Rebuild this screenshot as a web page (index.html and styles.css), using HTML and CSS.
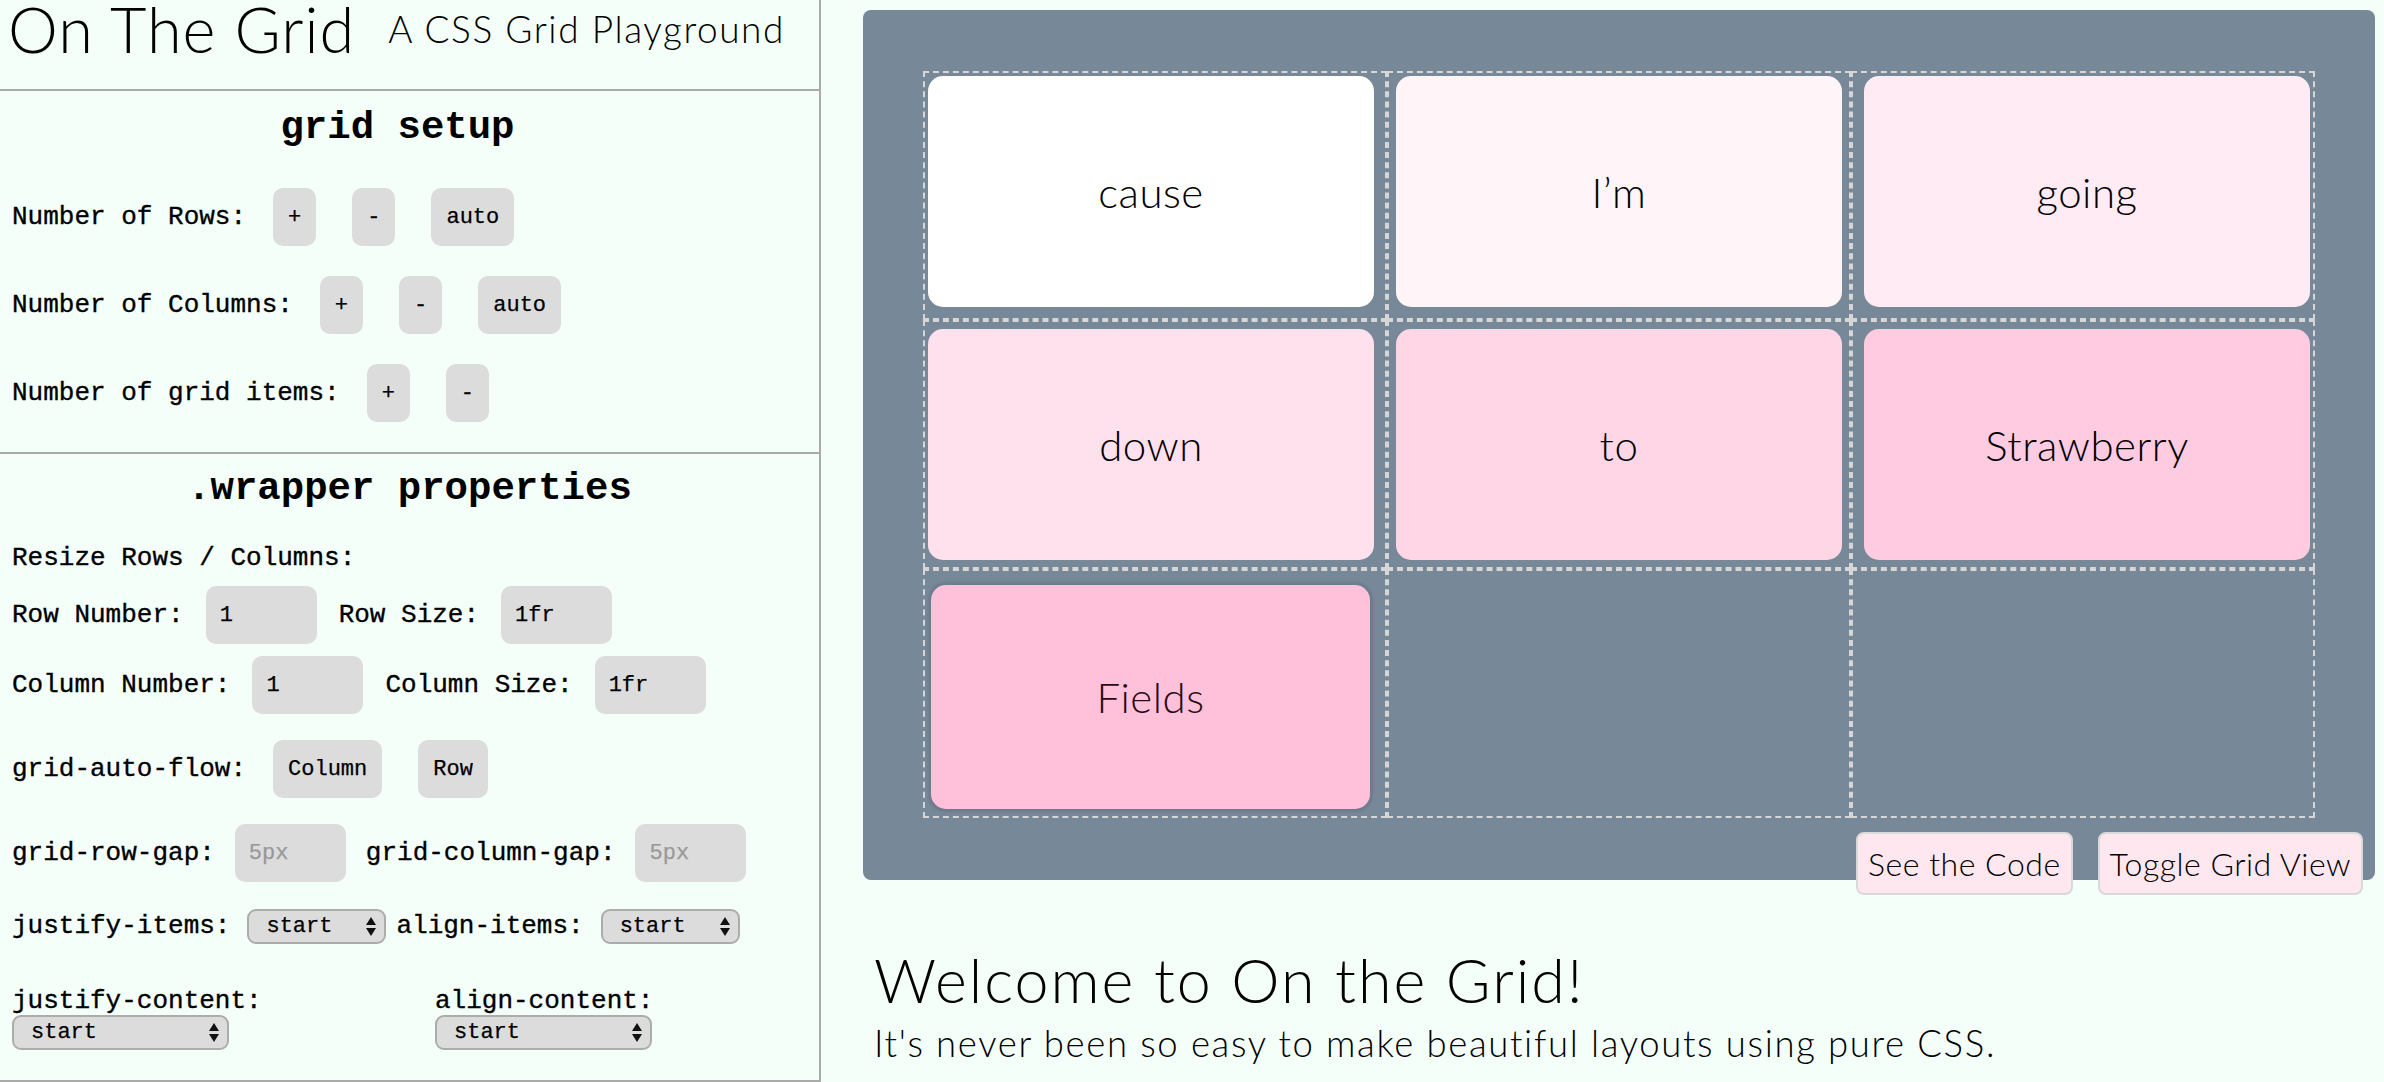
FILE: index.html
```html
<!DOCTYPE html>
<html lang="en">
<head>
<meta charset="utf-8">
<title>On The Grid</title>
<link rel="stylesheet" href="styles.css">
</head>
<body>
<div class="app">
  <aside class="panel">
    <header class="brand">
      <h1 class="brand-title">On The Grid</h1>
      <p class="brand-sub">A CSS Grid Playground</p>
    </header>

    <section class="setup">
      <h2 class="section-title section-title--setup">grid setup</h2>
      <div class="ctrl-row">
        <span class="lbl">Number of Rows:</span>
        <div class="btns">
          <button class="btn">+</button>
          <button class="btn">-</button>
          <button class="btn">auto</button>
        </div>
      </div>
      <div class="ctrl-row">
        <span class="lbl">Number of Columns:</span>
        <div class="btns">
          <button class="btn">+</button>
          <button class="btn">-</button>
          <button class="btn">auto</button>
        </div>
      </div>
      <div class="ctrl-row">
        <span class="lbl">Number of grid items:</span>
        <div class="btns">
          <button class="btn">+</button>
          <button class="btn">-</button>
        </div>
      </div>
    </section>

    <section class="props">
      <h2 class="section-title">.wrapper properties</h2>
      <p class="sub-lbl">Resize Rows / Columns:</p>
      <div class="field-row field-row--first">
        <span class="lbl">Row Number:</span>
        <input class="inp" type="text" value="1">
        <span class="lbl">Row Size:</span>
        <input class="inp" type="text" value="1fr">
      </div>
      <div class="field-row field-row--tight">
        <span class="lbl">Column Number:</span>
        <input class="inp" type="text" value="1">
        <span class="lbl">Column Size:</span>
        <input class="inp" type="text" value="1fr">
      </div>
      <div class="ctrl-row ctrl-row--flow">
        <span class="lbl">grid-auto-flow:</span>
        <div class="btns">
          <button class="btn">Column</button>
          <button class="btn">Row</button>
        </div>
      </div>
      <div class="field-row field-row--gap">
        <span class="lbl">grid-row-gap:</span>
        <input class="inp" type="text" placeholder="5px">
        <span class="lbl">grid-column-gap:</span>
        <input class="inp" type="text" placeholder="5px">
      </div>
      <div class="sel-row">
        <span class="lbl">justify-items:</span>
        <span class="sel"><select class="sel-box"><option>start</option></select></span>
        <span class="lbl">align-items:</span>
        <span class="sel"><select class="sel-box"><option>start</option></select></span>
      </div>
      <div class="content-row">
        <div class="content-col content-col--first">
          <span class="lbl lbl--block">justify-content:</span>
          <span class="sel"><select class="sel-box sel-box--wide"><option>start</option></select></span>
        </div>
        <div class="content-col">
          <span class="lbl lbl--block">align-content:</span>
          <span class="sel"><select class="sel-box sel-box--wide"><option>start</option></select></span>
        </div>
      </div>
    </section>
  </aside>

  <main class="stage-area">
    <div class="stage">
      <div class="board">
        <div class="gridlines">
          <div class="cell"></div><div class="cell"></div><div class="cell"></div>
          <div class="cell"></div><div class="cell"></div><div class="cell"></div>
          <div class="cell"></div><div class="cell"></div><div class="cell"></div>
        </div>
        <div class="wrapper">
          <div class="item item--1">cause</div>
          <div class="item item--2">I’m</div>
          <div class="item item--3">going</div>
          <div class="item item--4">down</div>
          <div class="item item--5">to</div>
          <div class="item item--6">Strawberry</div>
          <div class="item item--7">Fields</div>
        </div>
      </div>
      <div class="actions">
        <button class="act">See the Code</button>
        <button class="act">Toggle Grid View</button>
      </div>
    </div>
    <div class="intro">
      <h2 class="intro-title">Welcome to On the Grid!</h2>
      <p class="intro-text">It's never been so easy to make beautiful layouts using pure CSS.</p>
    </div>
  </main>
</div>
</body>
</html>
```

FILE: styles.css
```css
* { box-sizing: border-box; }

html, body {
  margin: 0;
  padding: 0;
  height: 100%;
}

body {
  background: #f5fffa;
  color: #000;
  overflow: hidden;
  font-family: "Liberation Mono", "Courier New", monospace;
}

.app {
  display: flex;
  align-items: flex-start;
  height: 1082px;
}

/* ---------- left panel ---------- */
.panel {
  width: 821px;
  flex: 0 0 821px;
  border-right: 2px solid #aaa;
  height: 1082px;
}

.brand {
  display: flex;
  align-items: flex-start;
  height: 91px;
  padding-left: 8px;
  border-bottom: 2px solid #aaa;
  font-family: "Lato", "Open Sans", sans-serif;
  font-weight: 300;
}

.brand-title {
  margin: 0;
  font-size: 63px;
  line-height: 57px;
  font-weight: 300;
  letter-spacing: 1px;
}

.brand-sub {
  margin: 7px 0 0 33px;
  font-size: 37px;
  line-height: 44px;
  letter-spacing: 1.55px;
}

.section-title {
  margin: 0;
  font-size: 39px;
  line-height: 44px;
  font-weight: 700;
  text-align: center;
}

.section-title--setup {
  padding-right: 24px;
}

.setup {
  padding: 15px 0 30px 12px;
  border-bottom: 2px solid #aaa;
}

.setup .section-title {
  margin-bottom: 38px;
  margin-left: -12px;
}

.lbl {
  font-size: 26px;
  line-height: 29px;
  white-space: pre;
  -webkit-text-stroke: 0.35px #000;
}

.ctrl-row {
  display: flex;
  align-items: center;
  height: 58px;
  margin-bottom: 30px;
}

.ctrl-row:last-child {
  margin-bottom: 0;
}

.btns {
  display: flex;
  gap: 36px;
  margin-left: 27px;
  height: 58px;
}

.btn {
  height: 58px;
  padding: 0 15px;
  border: none;
  border-radius: 10px;
  background: #dcdcdc;
  font-family: "Liberation Mono", "Courier New", monospace;
  font-size: 22px;
  color: #000;
  -webkit-text-stroke: 0.25px #000;
}

.props {
  padding: 13px 0 30px 12px;
  border-bottom: 2px solid #aaa;
}

.props .section-title {
  margin-left: -12px;
}

.sub-lbl {
  margin: 33px 0 0;
  font-size: 26px;
  line-height: 29px;
  -webkit-text-stroke: 0.35px #000;
}

.field-row {
  display: flex;
  align-items: center;
  gap: 22px;
  height: 58px;
}

.field-row--first { margin-top: 13px; }
.field-row--tight { margin-top: 12px; }
.field-row--gap { margin-top: 26px; gap: 20px; }

.ctrl-row--flow {
  margin-top: 26px;
  margin-bottom: 0;
}

.inp {
  width: 111px;
  height: 58px;
  padding: 0 14px;
  border: none;
  border-radius: 10px;
  background: #dcdcdc;
  font-family: "Liberation Mono", "Courier New", monospace;
  font-size: 22px;
  color: #000;
  outline: none;
  -webkit-text-stroke: 0.25px currentColor;
}

.inp::placeholder {
  color: #999;
}

.sel-row {
  display: flex;
  align-items: center;
  height: 35px;
  margin-top: 27px;
}

.sel-row .sel {
  margin: 0 10px 0 17px;
}

.sel {
  position: relative;
  display: inline-block;
}

.sel::before,
.sel::after {
  content: "";
  position: absolute;
  right: 10px;
  width: 0;
  height: 0;
  border-left: 5px solid transparent;
  border-right: 5px solid transparent;
  pointer-events: none;
}

.sel::before {
  top: 8px;
  border-bottom: 8px solid #111;
}

.sel::after {
  bottom: 8px;
  border-top: 8px solid #111;
}

.sel-box {
  display: block;
  width: 139px;
  height: 35px;
  padding: 0 0 0 17px;
  -webkit-appearance: none;
  appearance: none;
  background: #dcdcdc;
  border: 2px solid #acacac;
  border-radius: 9px;
  font-family: "Liberation Mono", "Courier New", monospace;
  font-size: 22px;
  color: #000;
  -webkit-text-stroke: 0.25px #000;
}

.sel-box--wide {
  width: 217px;
}

.content-row {
  display: flex;
  margin-top: 43px;
}

.content-col {
  display: flex;
  flex-direction: column;
  align-items: flex-start;
}

.content-col--first {
  flex: 0 0 423px;
}

.lbl--block {
  display: block;
  margin-bottom: -1px;
}

/* ---------- stage ---------- */
.stage-area {
  flex: 1;
  padding: 10px 9px 0 42px;
  font-family: "Lato", "Open Sans", sans-serif;
  font-weight: 300;
}

.stage {
  background: #778899;
  border-radius: 8px;
  padding: 61px 60px 0;
  height: 870px;
}

.board {
  position: relative;
  height: 747px;
}

.gridlines {
  position: absolute;
  inset: 0;
  display: grid;
  grid-template-columns: repeat(3, 1fr);
  grid-template-rows: repeat(3, 1fr);
}

.cell {
  border: 2px dashed #d6d6d6;
}

.wrapper {
  position: relative;
  display: grid;
  grid-template-columns: repeat(3, 1fr);
  grid-template-rows: repeat(3, 231px);
  column-gap: 22px;
  row-gap: 22px;
  padding: 5px;
  height: 747px;
}

.item {
  display: flex;
  align-items: center;
  justify-content: center;
  border-radius: 15px;
  font-size: 42px;
  line-height: 50px;
  color: #000;
  letter-spacing: 0.5px;
}

.item--1 { background: #ffffff; }
.item--2 { background: #fff4f8; }
.item--3 { background: #ffebf3; }
.item--4 { background: #ffe1ed; }
.item--5 { background: #ffd6e6; }
.item--6 { background: #ffcbe0; }
.item--7 {
  background: #ffc1da;
  margin: 3px 4px 4px 3px;
  box-shadow: 0 0 2px 3px rgba(60, 70, 90, 0.18);
  color: #2a0a12;
}

.actions {
  display: flex;
  justify-content: flex-end;
  gap: 25px;
  margin: 14px -48px -15px 0;
}

.act {
  height: 63px;
  padding: 0 10px;
  border: 2px solid #d9d9d9;
  border-radius: 8px;
  background: #ffe7f0;
  font-family: "Lato", "Open Sans", sans-serif;
  font-weight: 300;
  font-size: 32px;
  color: #000;
  letter-spacing: 0.5px;
}

.intro {
  padding-left: 11px;
  margin-top: 63px;
}

.intro-title {
  margin: 0;
  font-size: 61px;
  line-height: 73px;
  font-weight: 300;
  letter-spacing: 2px;
}

.intro-text {
  margin: 6px 0 0;
  font-size: 36.5px;
  line-height: 42px;
  letter-spacing: 1.65px;
}
```
